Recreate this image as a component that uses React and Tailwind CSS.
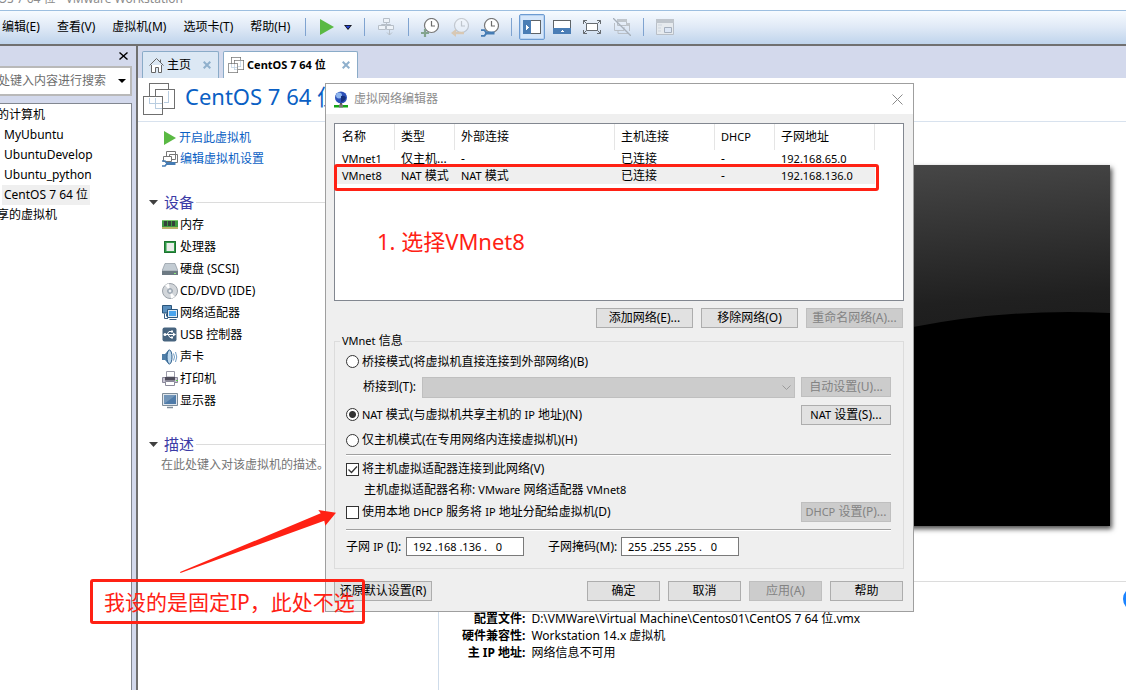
import React from "react";

const UI = "font-['Noto_Sans','Noto_Sans_CJK_SC',sans-serif]";

function VmIcon({ className, stroke = "#6f6f6f" }) {
  return (
    <svg viewBox="0 0 32 32" className={className} fill="none" shapeRendering="crispEdges">
      <path d="M6.500.5h19v19h-19z" fill="#fff" stroke={stroke} strokeWidth="1.400" />
      <path d="M12.500 6.500h19v19h-19z" fill="#fff" stroke={stroke} strokeWidth="1.400" />
      <path d="M.5 13.500h19v18H.5z" fill="#fff" stroke={stroke} strokeWidth="1.400" />
      <path d="M6.500 14.500v6h12M12.500 14.500v11h6M25.500 7.500v12h-5" stroke="#b9cde0" strokeWidth="1.400" />
    </svg>
  );
}

function Sep() {
  return <span className="h-[18px] w-px shrink-0 bg-[#7fa3d0]" />;
}

function Clock({ children, faded }) {
  return (
    <svg viewBox="0 0 18 19" className="h-[19px] w-[18px]" fill="none">
      <g opacity={faded ? 0.3 : 1}>
        <circle cx="10.500" cy="7.500" r="7" fill="#fff" stroke="#777" strokeWidth="1.200" />
        <path d="M10.500 3V8H14" stroke="#6b6b6b" strokeWidth="1.200" />
      </g>
      {children}
    </svg>
  );
}

function ToolButton({ label, children, className = "" }) {
  return (
    <button type="button" aria-label={label} className={`flex shrink-0 items-center justify-center ${className}`}>
      {children}
    </button>
  );
}

const menus = ["编辑(E)", "查看(V)", "虚拟机(M)", "选项卡(T)", "帮助(H)"];

function MenuBar() {
  return (
    <div className="flex h-[36px] shrink-0 items-center border-t border-b-2 border-t-[#9dbfe0] border-b-[#707070] bg-linear-to-b from-[#f7fbff] via-[#dfe9f6] to-[#bfd4ec] pb-px">
      <nav className="flex w-[305px] shrink-0 gap-[17px] pl-[2px]">
        {menus.map((m) => (
          <button type="button" key={m} className="whitespace-nowrap">
            {m}
          </button>
        ))}
      </nav>
      <Sep />
      <ToolButton label="启动" className="ml-[14px]">
        <svg viewBox="0 0 14 16" className="h-4 w-[14px]"><path d="M0 0l14 8-14 8z" fill="#5ab943" /></svg>
      </ToolButton>
      <ToolButton label="电源选项" className="mr-3 ml-[10px]">
        <svg viewBox="0 0 8 5" className="h-[5px] w-2"><path d="M0 0h8L4 5z" fill="#111" /><path d="M1.500.8h5L4 3.800z" fill="#2443d8" /></svg>
      </ToolButton>
      <Sep />
      <ToolButton label="发送按键" className="mx-[13px]">
        <svg viewBox="0 0 17 18" className="h-[18px] w-[17px]" fill="none" stroke="#b7bfc8">
          <path d="M5.500.5h6v4h-6zM.5 7.500h7v4h-7zM8.500 7.500h7v4h-7z" fill="#eef3f9" />
          <path d="M8.500 4.500v3M3.500 7.500v-1h9v1M11.500 11.500v5.500M9 14.500l2.500 2.500 2.500-2.500" />
        </svg>
      </ToolButton>
      <Sep />
      <div className="mx-3 flex gap-3">
        <ToolButton label="拍摄快照">
          <Clock><path d="M4 11v8M0 15h8" stroke="#83a48e" strokeWidth="2.200" /></Clock>
        </ToolButton>
        <ToolButton label="恢复快照">
          <Clock faded><path d="M13 15H3" stroke="#d8c8b4" strokeWidth="2.500" /><path d="M0 15l5-4v8z" fill="#d8c8b4" /></Clock>
        </ToolButton>
        <ToolButton label="管理快照">
          <Clock>
            <path d="M4 15h9.500" stroke="#457cb4" strokeWidth="3" />
            <path d="M0 12.200h3.500L5.500 15l-2 2.800H0" fill="none" stroke="#457cb4" strokeWidth="1.800" />
          </Clock>
        </ToolButton>
      </div>
      <Sep />
      <ToolButton label="显示库" className="ml-[7px] h-[26px] w-[26px] rounded-xs border border-[#6c9bd2] bg-[#d5e6fa] ring-1 ring-[#b8d2f0] ring-inset">
        <svg viewBox="0 0 18 14" className="h-[14px] w-[18px]" shapeRendering="crispEdges">
          <path d="M.5.5h17v13H.5z" fill="#fff" stroke="#5f6468" />
          <path d="M0 0h8v14H0z" fill="#4a7db5" /><path d="M3 5l3 2-3 3z" fill="#fff" />
        </svg>
      </ToolButton>
      <div className="mx-2 flex gap-3 pr-1">
        <ToolButton label="显示缩略图栏">
          <svg viewBox="0 0 18 14" className="h-[14px] w-[18px]" shapeRendering="crispEdges">
            <path d="M.5.5h17v13H.5z" fill="#fff" stroke="#5f6468" />
            <path d="M0 8h18v6H0z" fill="#4a7db5" /><path d="M7 12l2-2 3 2z" fill="#fff" />
          </svg>
        </ToolButton>
        <ToolButton label="全屏">
          <svg viewBox="0 0 18 14" className="h-[14px] w-[18px]" fill="none" stroke="#666b70">
            <path d="M3.500 3.500h11v7h-11z" fill="#fff" />
            <path d="M.5 4V.5H4M14 .5h3.500V4M17.500 10v3.500H14M4 13.500H.5V10M.5.5l3 3M17.500.5l-3 3M17.500 13.500l-3-3M.5 13.500l3-3" />
          </svg>
        </ToolButton>
        <ToolButton label="Unity">
          <svg viewBox="0 0 18 18" className="h-[18px] w-[18px]" fill="none" stroke="#b9bfc6">
            <path d="M4.500 1.500h9v6h-9z" /><path d="M4 1h10v3H4zM13 5h4v3h-4z" fill="#c0c6cc" stroke="none" />
            <path d="M16.500 7v6M1.500 5v7.500h9.500V9" /><path d="M5 12.500v3h10" />
            <path d="M0 0l18 18" stroke="#a7b0ba" strokeWidth="1.300" />
          </svg>
        </ToolButton>
      </div>
      <Sep />
      <ToolButton label="控制台视图" className="ml-3">
        <svg viewBox="0 0 18 16" className="h-4 w-[18px]" fill="none" stroke="#b9bfc7">
          <path d="M.5.5h17v15H.5z" fill="#e6eaee" /><path d="M0 0h18v4H0z" fill="#bfc5cc" stroke="none" />
          <path d="M2 6h4M2 9h3M2 12h3" stroke="#cdd5de" /><path d="M8.500 8.500h7v5h-7z" fill="#dce6f5" stroke="#a5afbd" />
        </svg>
      </ToolButton>
    </div>
  );
}

const machines = ["MyUbuntu", "UbuntuDevelop", "Ubuntu_python", "CentOS 7 64 位"];

function Sidebar() {
  return (
    <aside className="flex w-[136px] shrink-0 flex-col overflow-hidden bg-[#d3d9ec] pr-1">
      <div className="flex h-5 shrink-0 items-center justify-end pr-1">
        <button type="button" aria-label="关闭库">
          <svg viewBox="0 0 9 8" className="h-2 w-[9px]" stroke="#000" strokeWidth="1.400"><path d="M.5.5l8 7M8.500.5l-8 7" /></svg>
        </button>
      </div>
      <div className="flex h-[30px] shrink-0 items-center border-y-2 border-r-2 border-[#b9b9b9] bg-white">
        <input aria-label="搜索" placeholder="处键入内容进行搜索" className="w-[116px] -indent-[2px] outline-none placeholder:text-[#6d6d6d]" />
        <svg viewBox="0 0 8 4" className="ml-[2px] h-1 w-2"><path d="M0 0h8L4 4z" fill="#000" /></svg>
      </div>
      <div className="mt-[7px] flex-1 border-t border-r border-[#828790] bg-white pt-px leading-5">
        <div className="-ml-[3px]">的计算机</div>
        <ul className="pl-[2px]">
          {machines.map((m) => (
            <li key={m}>
              <span className={`inline-block px-[2px] whitespace-nowrap ${m.startsWith("Cent") ? "bg-[#efefef]" : ""}`}>{m}</span>
            </li>
          ))}
        </ul>
        <div className="-ml-[3px]">享的虚拟机</div>
      </div>
    </aside>
  );
}

function TabClose() {
  return (
    <svg viewBox="0 0 8 8" className="h-2 w-2" stroke="#8fb0cc" strokeWidth="2"><path d="M.7.7l6.600 6.600M7.300.7L.7 7.300" /></svg>
  );
}

function Tabs() {
  return (
    <div className="flex h-8 shrink-0 items-end gap-1 bg-[#d3d9ec] pl-1" role="tablist">
      <button type="button" role="tab" aria-selected="false" className="flex h-[27px] w-[77px] items-center rounded-t-xs border border-b-0 border-[#8aabc8] bg-[#dce8f4] pl-[6px]">
        <svg viewBox="0 0 15 15" className="h-[15px] w-[15px]" fill="none" stroke="#666">
          <path d="M2.500 7v7.500h4v-5h3v5h3V7" fill="#fff" /><path d="M.5 7.500l7-7 7 7M11.500 4V1.500" />
        </svg>
        <span className="mr-3 ml-[3px]">主页</span>
        <TabClose />
      </button>
      <button type="button" role="tab" aria-selected="true" className="flex h-[27px] w-[135px] items-center rounded-t-xs border border-b-0 border-[#8aabc8] bg-white pl-1">
        <VmIcon className="h-4 w-4" />
        <span className="mr-auto ml-[3px] text-[11px] font-bold whitespace-nowrap">CentOS 7 64 位</span>
        <span className="mr-[7px]"><TabClose /></span>
      </button>
    </div>
  );
}

const icons = {
  mem: (
    <>
      <path d="M0 3h16v9H0z" fill="#3e9a3f" /><path d="M0 10h16v2H0z" fill="#b8b56a" />
      <path d="M2 4h3v5H2zM6 4h3v5H6zM10 4h3v5h-3z" fill="#34423a" /><path d="M0 3h16v1H0z" fill="#7cc56f" />
    </>
  ),
  cpu: (
    <>
      <path d="M2 2h12v12H2z" fill="#2f9a45" /><path d="M4.500 4h7.500v8h-7.500z" fill="#e9edea" /><path d="M2.500 2.500h11v11h-11z" fill="none" stroke="#1d7131" />
    </>
  ),
  disk: (
    <>
      <path d="M3 2.500h10l3 7.500H0z" fill="#c3ccd3" /><path d="M3 2.500h10l3 7.500H0z" fill="none" stroke="#8c979f" strokeWidth=".7" />
      <path d="M0 10h16v4H0z" fill="#6d7a83" /><path d="M12 12h2v1h-2z" fill="#8df07a" />
    </>
  ),
  cd: (
    <>
      <circle cx="8" cy="8" r="7.500" fill="#d2d6da" stroke="#9aa1a8" /><path d="M8 8L3 2l4-1.500zM8 8l5 6-4 1.500z" fill="#fff" />
      <circle cx="8" cy="8" r="2.500" fill="#b4bfca" stroke="#8b95a0" strokeWidth=".7" /><circle cx="8" cy="8" r="1" fill="#fff" />
    </>
  ),
  net: (
    <>
      <path d="M.5.5h9v7.500h-9z" fill="#5a8fbe" stroke="#2b567c" /><path d="M5.500 4.500h10v8h-10z" fill="#dfeaf3" stroke="#2b567c" /><path d="M7 6h7v5H7z" fill="#49a4ee" />
      <path d="M7.500 14.500h7M2.500 8.500v5H6M4.500 8.500v3" stroke="#3b6288" fill="none" />
    </>
  ),
  usb: (
    <>
      <rect x=".5" y=".5" width="14" height="14" rx="2" fill="#47647f" /><path d="M2 7.500h10M5 7.500l2-3h2M6 7.500l2 3h2" stroke="#fff" fill="none" />
      <circle cx="3" cy="7.500" r="1.500" fill="#fff" /><path d="M11 5.500l3 2-3 2zM9 3.500h2v2H9zM9 9.500h2v2H9z" fill="#fff" />
    </>
  ),
  sound: (
    <>
      <path d="M0 5h3l4-4.500v15L3 11H0z" fill="#4e7ea8" /><ellipse cx="7.500" cy="8" rx="2.500" ry="7" fill="#bcd8ee" stroke="#2f5f8c" />
      <path d="M11.500 4.500q2 3.500 0 7M13.500 3q2.500 5 0 10" stroke="#6f9cc4" fill="none" />
    </>
  ),
  print: (
    <>
      <path d="M4.500.5h8V6h-8z" fill="#fff" stroke="#9a9aa8" /><path d="M.5 6.500h15v5H.5z" fill="#c9c6d4" stroke="#8a889a" />
      <path d="M3 6h10v3.500H3z" fill="#4f4d5c" /><path d="M3.500 10.500h9v4h-9z" fill="#fff" stroke="#8a8a9a" /><path d="M14 9h2v1h-2z" fill="#5fcf4a" />
    </>
  ),
  display: (
    <>
      <path d="M.5.5h15v12H.5z" fill="#dfe6ec" stroke="#7d8c99" /><path d="M2 2h12v9H2z" fill="#4f7ba8" />
      <path d="M2 11L14 2H2z" fill="#7295b8" /><path d="M5 14.500h6" stroke="#7d8c99" strokeWidth="1.500" />
    </>
  ),
};

const devices = [
  ["mem", "内存"],
  ["cpu", "处理器"],
  ["disk", "硬盘 (SCSI)"],
  ["cd", "CD/DVD (IDE)"],
  ["net", "网络适配器"],
  ["usb", "USB 控制器"],
  ["sound", "声卡"],
  ["print", "打印机"],
  ["display", "显示器"],
];

function Heading({ children }) {
  return (
    <h2 className="flex h-[22px] items-center text-[15px] text-[#3b3ba6]">
      <svg viewBox="0 0 9 5" className="mr-[6px] h-[5px] w-[9px]"><path d="M0 0h9L4.500 5z" fill="#404040" /></svg>
      {children}
      <span className="ml-[2px] h-px flex-1 bg-[#dcdcdc]" />
    </h2>
  );
}

const details = [
  ["配置文件:", "D:\\VMWare\\Virtual Machine\\Centos01\\CentOS 7 64 位.vmx"],
  ["硬件兼容性:", "Workstation 14.x 虚拟机"],
  ["主 IP 地址:", "网络信息不可用"],
];

function Main() {
  return (
    <main className="flex min-w-0 flex-1 flex-col border-l-2 border-[#707070] bg-white">
      <Tabs />
      <header className="flex h-11 shrink-0 items-start border-b border-[#d8e2ee] pt-[5px] pl-[5px]">
        <VmIcon className="h-8 w-8" />
        <h1 className="ml-[10px] text-[22px] leading-[26px] whitespace-nowrap text-[#0a5fc4]">CentOS 7 64 位</h1>
      </header>
      <div className="flex min-h-0 flex-1">
        <section className="w-[300px] shrink-0 pt-[5px] pl-[11px]">
          <div className="flex flex-col pl-[13px] leading-[21px] text-[#0a5fc4]">
            <a href="#start" className="flex items-center">
              <svg viewBox="0 0 13 14" className="mx-px h-[14px] w-[13px]"><path d="M1 0l12 7-12 7z" fill="#5ab943" /></svg>
              <span className="ml-[2px]">开启此虚拟机</span>
            </a>
            <a href="#settings" className="flex items-center">
              <svg viewBox="0 0 16 16" className="h-4 w-4" fill="none" stroke="#777">
                <path d="M4.500.5h9v8h-9zM7.500 3.500h8v8h-8z" fill="#fff" /><path d="M1.500 5.500h8v5h-8z" fill="#fff" />
                <path d="M4 12.500h9.500" stroke="#457cb4" strokeWidth="3" /><path d="M0 10h3l2 2.500-2 2.500H0" stroke="#457cb4" strokeWidth="1.600" />
              </svg>
              <span className="ml-[2px]">编辑虚拟机设置</span>
            </a>
          </div>
          <div className="mt-[22px]">
            <Heading>设备</Heading>
            <ul className="pt-px pl-[13px]">
              {devices.map(([k, name]) => (
                <li key={k} className="flex h-[22px] items-center">
                  <svg viewBox="0 0 16 16" className="mr-[2px] h-4 w-4">{icons[k]}</svg>
                  {name}
                </li>
              ))}
            </ul>
          </div>
          <div className="mt-[21px]">
            <Heading>描述</Heading>
            <p className="pt-px pl-3 leading-[18px] whitespace-nowrap text-[#757575]">在此处键入对该虚拟机的描述。</p>
          </div>
        </section>
        <section className="flex min-w-0 flex-1 flex-col border-l border-[#cfdcea]">
          <div className="flex h-[460px] shrink-0 justify-end border-b border-[#dcdcdc] pt-[43px] pr-4">
            <svg viewBox="0 0 640 361" className="h-[361px] w-[640px] shadow-[2px_3px_5px_rgba(0,0,0,0.7)]">
              <defs>
                <linearGradient id="glare" x1=".4" y1="0" x2=".55" y2="1">
                  <stop offset="0" stopColor="#4a4a4a" />
                  <stop offset=".5" stopColor="#202020" />
                  <stop offset="1" stopColor="#101010" />
                </linearGradient>
              </defs>
              <path d="M0 0h640v361H0z" fill="#000" />
              <path d="M0 0h640v148q-100-5-197 14Q200 205 0 300z" fill="url(#glare)" />
            </svg>
          </div>
          <table className="mt-7 ml-[23px] w-fit leading-[17px]">
            <tbody>
              {details.map(([k, v]) => (
                <tr key={k}>
                  <th scope="row" className="p-0 pr-[6px] text-right font-bold whitespace-nowrap">{k}</th>
                  <td className="p-0 whitespace-nowrap">{v}</td>
                </tr>
              ))}
            </tbody>
          </table>
        </section>
      </div>
    </main>
  );
}

// Latin words sit one pixel smaller than the Chinese text around them.
function Mixed({ children }) {
  return (
    <span>
      {children.split(/([A-Za-z]{2,}\d*)/).map((part, i) =>
        i % 2 ? (
          <span key={i} className="text-[11px]">
            {part}
          </span>
        ) : (
          part
        ),
      )}
    </span>
  );
}

function Btn({ children, disabled, className = "w-[97px]" }) {
  return (
    <button
      type="button"
      disabled={disabled}
      className={`h-5 shrink-0 border text-center leading-[18px] whitespace-nowrap ${
        disabled ? "border-[#bfbfbf] bg-[#cccccc] text-[#838383]" : "border-[#adadad] bg-[#e1e1e1] text-black"
      } ${className}`}
    >
      <Mixed>{children}</Mixed>
    </button>
  );
}

function Radio({ checked, children }) {
  return (
    <label className="flex items-center gap-[3px] whitespace-nowrap">
      <input
        type="radio"
        name="mode"
        defaultChecked={checked}
        className="h-[13px] w-[13px] shrink-0 appearance-none rounded-full border border-[#333] bg-white checked:bg-[radial-gradient(circle,#333_0_3px,#fff_4px)]"
      />
      <Mixed>{children}</Mixed>
    </label>
  );
}

function Check({ checked, children }) {
  return (
    <label className="flex items-center gap-[3px] whitespace-nowrap">
      <span className="grid">
        <input type="checkbox" defaultChecked={checked} className="peer h-[13px] w-[13px] appearance-none border border-[#333] bg-white [grid-area:1/1]" />
        <svg viewBox="0 0 13 13" className="pointer-events-none hidden h-[13px] w-[13px] [grid-area:1/1] peer-checked:block" fill="none" stroke="#333" strokeWidth="1.300">
          <path d="M2.500 6.500l3 3 5.500-6" />
        </svg>
      </span>
      <Mixed>{children}</Mixed>
    </label>
  );
}

const columns = [
  ["名称", "w-[60px] pl-[7px]"],
  ["类型", "w-[60px] pl-[6px]"],
  ["外部连接", "w-[160px] pl-[6px]"],
  ["主机连接", "w-[100px] pl-[6px]"],
  ["DHCP", "w-[60px] pl-[6px]"],
  ["子网地址", "w-[100px] pl-[6px]"],
];
const networks = [
  ["VMnet1", "仅主机...", "-", "已连接", "-", "192.168.65.0"],
  ["VMnet8", "NAT 模式", "NAT 模式", "已连接", "-", "192.168.136.0"],
];

function Rule() {
  return <hr className="mr-3 ml-[11px] h-[2px] border-t border-b border-t-[#a0a0a0] border-b-white" />;
}

function NetworkEditor() {
  return (
    <div role="dialog" aria-label="虚拟网络编辑器" className="absolute top-[83px] left-[325px] w-[589px] border border-[#9f9f9f] bg-[#efefef] text-[12px] leading-4">
      <div className="flex h-[30px] items-center bg-white pr-[10px] pl-[7px] text-[#8d8d8d]">
        <svg viewBox="0 0 16 17" className="mr-[5px] h-[17px] w-4">
          <circle cx="8" cy="6.500" r="6" fill="#2b50b8" /><circle cx="6" cy="4.500" r="3" fill="#8fb6ee" /><path d="M8 5q4-1 5 2-2 4-5 4z" fill="#16307c" />
          <path d="M7 12h2v2H7z" fill="#555" /><path d="M1 14h14v2.500H1z" fill="#16a516" /><path d="M6 13.500h4v3H6z" fill="#777" />
        </svg>
        <span className="flex-1">虚拟网络编辑器</span>
        <button type="button" aria-label="关闭">
          <svg viewBox="0 0 11 11" className="h-[11px] w-[11px]" stroke="#8a8a8a"><path d="M.5.5l10 10M10.500.5l-10 10" /></svg>
        </button>
      </div>
      <div className="pt-[9px] pr-[9px] pb-[10px] pl-2">
        <div className="relative h-[178px] border border-[#828790] bg-white">
          <table className="table-fixed border-separate border-spacing-0 text-left">
            <thead>
              <tr className="h-[26px]">
                {columns.map(([c, w]) => (
                  <th key={c} className={`${w} border-r border-[#e5e5e5] py-0 pr-0 font-normal`}><Mixed>{c}</Mixed></th>
                ))}
              </tr>
            </thead>
            <tbody className="leading-[17px]">
              {networks.map((r) => (
                <tr key={r[0]} className={`h-[17px] ${r[0] === "VMnet8" ? "bg-[#efefef]" : ""}`}>
                  {r.map((c, i) => (
                    <td key={i} className={`py-0 pr-0 whitespace-nowrap ${i === 0 ? "pl-[7px]" : "pl-[6px]"} ${i === 0 || i === 5 ? "text-[11px]" : ""}`}><Mixed>{c}</Mixed></td>
                  ))}
                </tr>
              ))}
            </tbody>
          </table>
          <div className="absolute top-[40px] -left-px h-[27px] w-[545px] rounded-[3px] border-3 border-[#ff2114]" />
          <p className="absolute top-[103px] left-[42px] text-[22px] leading-7 whitespace-nowrap text-[#ff2114]">1. 选择VMnet8</p>
        </div>
        <div className="mt-[7px] flex justify-end gap-2 pr-px">
          <Btn>添加网络(E)...</Btn>
          <Btn>移除网络(O)</Btn>
          <Btn disabled>重命名网络(A)...</Btn>
        </div>
        <fieldset className="mt-[5px] border border-[#dcdcdc] pb-3">
          <legend className="ml-[5px] px-[2px]"><Mixed>VMnet 信息</Mixed></legend>
          <div className="flex h-[25px] items-center pl-[11px]"><Radio>桥接模式(将虚拟机直接连接到外部网络)(B)</Radio></div>
          <div className="flex h-[26px] items-center gap-[6px] pr-3 pl-[28px]">
            <label htmlFor="bridge" className="w-[53px] shrink-0 whitespace-nowrap">桥接到(T):</label>
            <div className="grid flex-1">
              <select id="bridge" disabled className="h-[21px] w-full appearance-none border border-[#bfbfbf] bg-[#cccccc] [grid-area:1/1]" />
              <svg viewBox="0 0 9 5" className="pointer-events-none mr-1 h-[5px] w-[9px] self-center justify-self-end [grid-area:1/1]" fill="none" stroke="#9a9a9a"><path d="M.5.5l4 4 4-4" /></svg>
            </div>
            <Btn disabled className="w-[90px]">自动设置(U)...</Btn>
          </div>
          <div className="flex h-[29px] items-center justify-between pr-3 pl-[11px]">
            <Radio checked>NAT 模式(与虚拟机共享主机的 IP 地址)(N)</Radio>
            <Btn className="w-[90px]">NAT 设置(S)...</Btn>
          </div>
          <div className="mb-[3px] flex h-[22px] items-center pl-[11px]"><Radio>仅主机模式(在专用网络内连接虚拟机)(H)</Radio></div>
          <Rule />
          <div className="flex h-[26px] items-center pl-[11px]"><Check checked>将主机虚拟适配器连接到此网络(V)</Check></div>
          <div className="flex h-4 items-center pl-[29px]"><Mixed>主机虚拟适配器名称: VMware 网络适配器 VMnet8</Mixed></div>
          <div className="mb-[3px] flex h-7 items-center justify-between pr-3 pl-[11px]">
            <Check>使用本地 DHCP 服务将 IP 地址分配给虚拟机(D)</Check>
            <Btn disabled className="w-[90px]">DHCP 设置(P)...</Btn>
          </div>
          <Rule />
          <div className="mt-[6px] flex items-center pl-[11px]">
            <label htmlFor="ip" className="w-[60px] whitespace-nowrap"><Mixed>子网 IP (I):</Mixed></label>
            <input id="ip" defaultValue="192 .168 .136 .   0" className="h-[19px] w-[118px] border border-[#7a7a7a] bg-white pl-[6px] text-[11px] outline-none" />
            <label htmlFor="mask" className="ml-6 w-[73px] whitespace-nowrap">子网掩码(M):</label>
            <input id="mask" defaultValue="255 .255 .255 .   0" className="h-[19px] w-[118px] border border-[#7a7a7a] bg-white pl-[6px] text-[11px] outline-none" />
          </div>
        </fieldset>
        <div className="mt-3 flex gap-2 pr-px">
          <Btn className="mr-auto w-[98px]">还原默认设置(R)</Btn>
          <Btn className="w-[73px]">确定</Btn>
          <Btn className="w-[73px]">取消</Btn>
          <Btn className="w-[73px]" disabled>应用(A)</Btn>
          <Btn className="w-[73px]">帮助</Btn>
        </div>
      </div>
    </div>
  );
}

function Notes() {
  return (
    <>
      <svg viewBox="0 0 160 66" className="pointer-events-none absolute top-[508px] left-[178px] h-[66px] w-40">
        <path d="M2 64L142.700 5.300 140.300 2 158 4.700 147.300 17.700 146.300 12.700 2.500 65z" fill="#ff2114" />
      </svg>
      <div className="pointer-events-none absolute top-[579px] left-[90px] flex h-[45px] w-[275px] items-center rounded-[3px] border-3 border-[#ff2114] pl-[11px] text-[21px] whitespace-nowrap text-[#ff2114]">
        我设的是固定IP，此处不选
      </div>
      <span className="absolute top-[587px] -right-[21px] h-6 w-6 rounded-full bg-[#1a83ff]" />
    </>
  );
}

export default function App() {
  return (
    <div className={`relative flex h-screen flex-col overflow-hidden bg-white text-[12px] leading-4 text-black ${UI}`}>
      <div className="flex h-[10px] shrink-0 items-end pb-[3px] text-[#8c8c8c]">
        <div className="flex w-[183px] justify-end whitespace-nowrap"><span>OS 7 64 位 - VMware Workstation</span></div>
      </div>
      <MenuBar />
      <div className="flex min-h-0 flex-1">
        <Sidebar />
        <Main />
      </div>
      <NetworkEditor />
      <Notes />
    </div>
  );
}
